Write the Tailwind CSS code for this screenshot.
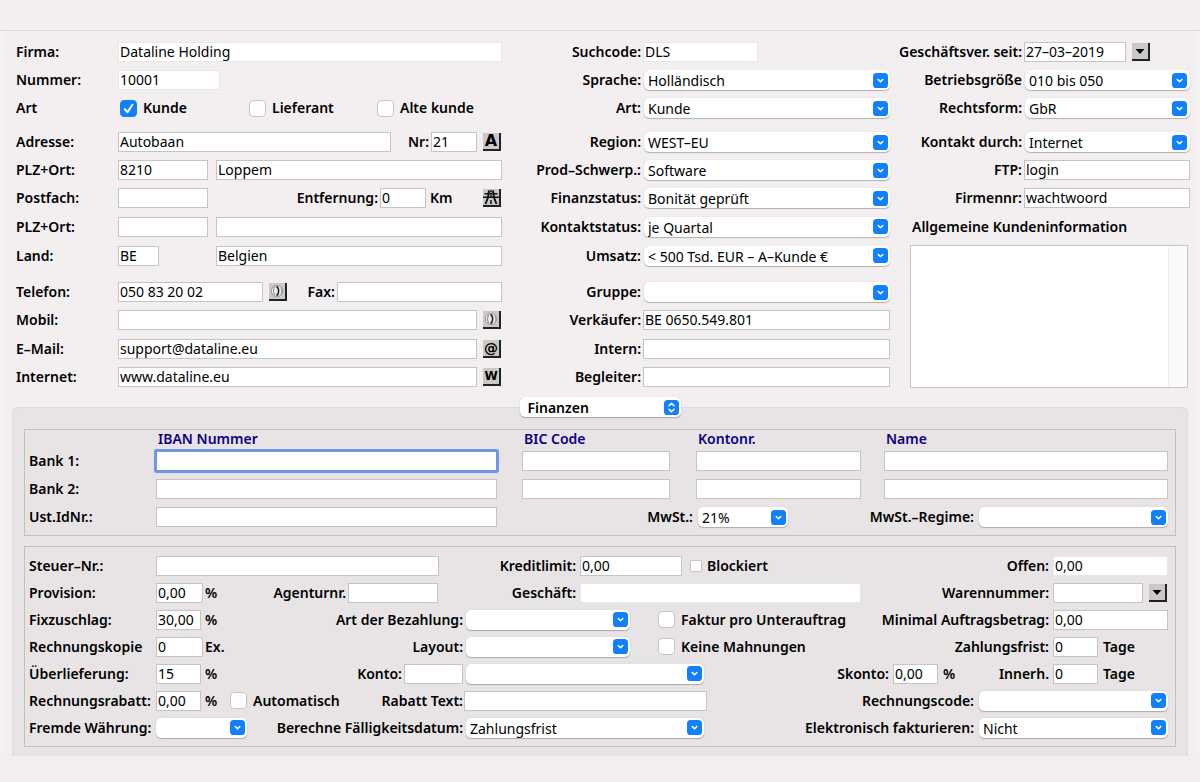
<!DOCTYPE html>
<html lang="de">
<head>
<meta charset="utf-8">
<title>Kundenstamm</title>
<script src="https://cdn.jsdelivr.net/npm/@tailwindcss/browser@4"></script>
</head>
<body class="min-h-screen bg-[#f3eff0] font-['Noto_Sans',sans-serif] text-sm leading-5 text-black">
<svg class="hidden" aria-hidden="true">
  <defs>
    <symbol id="down" viewBox="0 0 15 15"><rect width="15" height="15" rx="3.6" fill="#1280fb"/><path d="M5.2 6.5 7.5 8.8 9.8 6.5" fill="none" stroke="#fff" stroke-width="1.5" stroke-linecap="round" stroke-linejoin="round"/></symbol>
    <symbol id="updown" viewBox="0 0 15 15"><rect width="15" height="15" rx="3.6" fill="#1280fb"/><path d="M5 5.8 7.5 3.2 10 5.8M5 9.2l2.500 2.600L10 9.200" fill="none" stroke="#fff" stroke-width="1.500" stroke-linecap="round" stroke-linejoin="round"/></symbol>
    <symbol id="tick" viewBox="0 0 17 17"><path d="M4.800 9 7.500 12.300 12.400 4.800" fill="none" stroke="#fff" stroke-width="2" stroke-linecap="round" stroke-linejoin="round"/></symbol>
    <symbol id="phone" viewBox="0 0 14 14"><circle cx="7" cy="7" r="5.600" fill="#eeeeea" stroke="#999" stroke-width="1"/><path d="M4.500 2.500Q2.500 7 4.500 11.500" fill="none" stroke="#888" stroke-width="1"/><path d="M6.500 2 8.200 2.500Q10.600 7 8.200 11.500L6.500 12 6.300 10.300 7.400 9.600Q8.400 7 7.400 4.400L6.300 3.700Z" fill="#222"/><path d="M11 3.500Q12.500 7 11 10.500" fill="none" stroke="#888" stroke-width=".8"/></symbol>
    <symbol id="road" viewBox="0 0 16 16"><path d="M1.500 4.800h13M0 8.300h16" stroke="#111" stroke-width="1.500" fill="none"/><path d="M6 1.500 5 8.500 2.500 15M10 1.500l1 7L13.500 15" stroke="#111" stroke-width="1.900" fill="none"/><path d="M8 1v2.500M8 5.800v2M8 11v4" stroke="#111" stroke-width="1.500"/></symbol>
    <symbol id="arrow" viewBox="0 0 14 14"><path d="M2.500 5h9L7 10Z" fill="#000"/></symbol>
  </defs>
</svg>

<header class="h-[31px] border-b border-[#dbd7d8]"></header>

<form class="mx-px border-x border-white/60
  [&_b]:shrink-0 [&_label]:shrink-0 [&_b]:whitespace-nowrap [&_label]:whitespace-nowrap [&_label]:font-semibold [&_b]:font-semibold
  [&_input[type=text]]:h-5 [&_input[type=text]]:min-w-0 [&_input[type=text]]:border [&_input[type=text]]:bg-white [&_input[type=text]]:px-px [&_input[type=text]]:outline-none
  [&_input:not([readonly])]:border-[#c6c3c4] [&_input[readonly]]:border-[#e9e6e7]
  [&_input[type=checkbox]]:appearance-none [&_input[type=checkbox]]:border [&_input[type=checkbox]]:bg-white [&_input[type=checkbox]]:col-start-1 [&_input[type=checkbox]]:row-start-1
  [&_select]:h-5 [&_select]:w-full [&_select]:min-w-0 [&_select]:appearance-none [&_select]:rounded-[5px] [&_select]:bg-white [&_select]:pt-px [&_select]:pl-1 [&_select]:outline-none [&_select]:col-start-1 [&_select]:row-start-1 [&_select]:shadow-[0_1px_1px_#00000040,0_0_1px_#00000030]
  [&_button]:flex [&_button]:size-[18px] [&_button]:shrink-0 [&_button]:items-center [&_button]:justify-center [&_button]:border-r-2 [&_button]:border-b-2 [&_button]:border-[#222] [&_button]:bg-[#cbc9c6] [&_button]:text-base [&_button]:leading-none [&_button]:font-bold [&_button]:font-['DejaVu_Sans',sans-serif]">

  <div class="grid grid-cols-[500fr_388fr_300fr] pt-[7px] pr-2 [&>section]:min-w-0">

    <!-- Adresse -->
    <section class="flex flex-col pl-[14px]">
      <div class="mb-[6px]">
        <div class="flex h-7 items-center"><label for="firma" class="w-[102px]">Firma:</label><input id="firma" type="text" readonly class="flex-1" value="Dataline Holding"></div>
        <div class="flex h-7 items-center"><label for="nummer" class="w-[102px]">Nummer:</label><input id="nummer" type="text" readonly class="w-[102px]" value="10001"></div>
        <div class="flex h-7 items-center"><b class="w-[104px]">Art</b>
          <div class="flex flex-1 items-center">
            <div class="flex w-[129px] items-center gap-[6px]"><span class="grid"><input id="kunde" type="checkbox" checked class="size-[17px] rounded-[4px] border-[#1280fb]! bg-[#1280fb]!"><svg class="pointer-events-none col-start-1 row-start-1 size-[17px]"><use href="#tick"/></svg></span><label for="kunde">Kunde</label></div>
            <div class="flex w-[128px] items-center gap-[6px]"><input id="lieferant" type="checkbox" class="size-[17px] rounded-[4px]"><label for="lieferant">Lieferant</label></div>
            <div class="flex items-center gap-[6px]"><input id="alte" type="checkbox" class="size-[17px] rounded-[4px]"><label for="alte">Alte kunde</label></div>
          </div>
        </div>
      </div>
      <div class="mb-2">
        <div class="flex h-7 items-center"><label for="adresse" class="w-[102px]">Adresse:</label><input id="adresse" type="text" class="flex-1" value="Autobaan"><label for="nr" class="w-[40px] pr-[2px] text-right">Nr:</label><input id="nr" type="text" class="w-[46px]" value="21"><button type="button" class="mr-px ml-[6px]" aria-label="Adresse suchen">A</button></div>
        <div class="flex h-7 items-center"><label for="plz" class="w-[102px]">PLZ+Ort:</label><input id="plz" type="text" class="w-[90px]" value="8210"><input type="text" aria-label="Ort" class="ml-2 flex-1" value="Loppem"></div>
        <div class="flex h-7 items-center"><label for="postfach" class="w-[102px]">Postfach:</label><input id="postfach" type="text" class="w-[90px]"><label for="entf" class="flex-1 pr-[2px] text-right">Entfernung:</label><input id="entf" type="text" class="w-[46px]" value="0"><b class="w-[57px] pl-1">Km</b><button type="button" class="mr-px" aria-label="Route"><svg class="size-4"><use href="#road"/></svg></button></div>
        <div class="flex h-[29px] items-center"><label for="plz2" class="w-[102px]">PLZ+Ort:</label><input id="plz2" type="text" class="w-[90px]"><input type="text" aria-label="Ort Postfach" class="ml-2 flex-1"></div>
        <div class="flex h-[29px] items-center"><label for="land" class="w-[102px]">Land:</label><input id="land" type="text" class="w-[41px]" value="BE"><input type="text" aria-label="Landname" class="ml-[57px] flex-1" value="Belgien"></div>
      </div>
      <div>
        <div class="flex h-7 items-center"><label for="tel" class="w-[102px]">Telefon:</label><input id="tel" type="text" class="w-[145px]" value="050 83 20 02"><button type="button" class="ml-[6px]" aria-label="Anrufen"><svg class="size-[14px]"><use href="#phone"/></svg></button><label for="fax" class="w-[50px] pr-[2px] text-right">Fax:</label><input id="fax" type="text" class="flex-1"></div>
        <div class="flex h-7 items-center"><label for="mobil" class="w-[102px]">Mobil:</label><input id="mobil" type="text" class="flex-1"><button type="button" class="mr-px ml-[6px]" aria-label="Mobil anrufen"><svg class="size-[14px]"><use href="#phone"/></svg></button></div>
        <div class="flex h-[29px] items-center"><label for="mail" class="w-[102px]">E–Mail:</label><input id="mail" type="text" class="flex-1" value="support@dataline.eu"><button type="button" class="mr-px ml-[6px] text-sm!" aria-label="E-Mail schreiben">@</button></div>
        <div class="flex h-7 items-center"><label for="web" class="w-[102px]">Internet:</label><input id="web" type="text" class="flex-1" value="www.dataline.eu"><button type="button" class="mr-px ml-[6px] text-xs!" aria-label="Webseite öffnen">W</button></div>
      </div>
    </section>

    <!-- Klassifizierung -->
    <section class="flex flex-col [&_label]:w-[139px] [&_label]:text-right">
      <div class="mb-[6px]">
        <div class="flex h-7 items-center gap-[2px]"><label for="such">Suchcode:</label><input id="such" type="text" readonly class="w-[115px]" value="DLS"></div>
        <div class="flex h-7 items-center gap-[3px]"><label for="sprache">Sprache:</label><span class="grid flex-1 items-center"><select id="sprache"><option>Holländisch</option></select><svg class="pointer-events-none col-start-1 row-start-1 mr-[2px] size-[15px] justify-self-end"><use href="#down"/></svg></span></div>
        <div class="flex h-7 items-center gap-[3px]"><label for="art">Art:</label><span class="grid flex-1 items-center"><select id="art"><option>Kunde</option></select><svg class="pointer-events-none col-start-1 row-start-1 mr-[2px] size-[15px] justify-self-end"><use href="#down"/></svg></span></div>
      </div>
      <div class="mb-2">
        <div class="flex h-7 items-center gap-[3px]"><label for="region">Region:</label><span class="grid flex-1 items-center"><select id="region"><option>WEST–EU</option></select><svg class="pointer-events-none col-start-1 row-start-1 mr-[2px] size-[15px] justify-self-end"><use href="#down"/></svg></span></div>
        <div class="flex h-7 items-center gap-[3px]"><label for="prod">Prod–Schwerp.:</label><span class="grid flex-1 items-center"><select id="prod"><option>Software</option></select><svg class="pointer-events-none col-start-1 row-start-1 mr-[2px] size-[15px] justify-self-end"><use href="#down"/></svg></span></div>
        <div class="flex h-7 items-center gap-[3px]"><label for="fin">Finanzstatus:</label><span class="grid flex-1 items-center"><select id="fin"><option>Bonität geprüft</option></select><svg class="pointer-events-none col-start-1 row-start-1 mr-[2px] size-[15px] justify-self-end"><use href="#down"/></svg></span></div>
        <div class="flex h-[29px] items-center gap-[3px]"><label for="kst">Kontaktstatus:</label><span class="grid flex-1 items-center"><select id="kst"><option>je Quartal</option></select><svg class="pointer-events-none col-start-1 row-start-1 mr-[2px] size-[15px] justify-self-end"><use href="#down"/></svg></span></div>
        <div class="flex h-[29px] items-center gap-[3px]"><label for="umsatz">Umsatz:</label><span class="grid flex-1 items-center"><select id="umsatz"><option>&lt; 500 Tsd. EUR – A–Kunde €</option></select><svg class="pointer-events-none col-start-1 row-start-1 mr-[2px] size-[15px] justify-self-end"><use href="#down"/></svg></span></div>
      </div>
      <div>
        <div class="flex h-7 items-center gap-[3px]"><label for="gruppe">Gruppe:</label><span class="grid flex-1 items-center"><select id="gruppe"><option></option></select><svg class="pointer-events-none col-start-1 row-start-1 mr-[2px] size-[15px] justify-self-end"><use href="#down"/></svg></span></div>
        <div class="flex h-7 items-center gap-[2px]"><label for="verk">Verkäufer:</label><input id="verk" type="text" class="flex-1" value="BE 0650.549.801"></div>
        <div class="flex h-[29px] items-center gap-[2px]"><label for="intern">Intern:</label><input id="intern" type="text" class="flex-1"></div>
        <div class="flex h-7 items-center gap-[2px]"><label for="begl">Begleiter:</label><input id="begl" type="text" class="flex-1"></div>
      </div>
    </section>

    <!-- Geschäftsbeziehung -->
    <section class="flex flex-col">
      <div class="mb-[6px] [&_label]:w-[132px] [&_label]:text-right">
        <div class="flex h-7 items-center gap-[2px]"><label for="seit">Geschäftsver. seit:</label><input id="seit" type="text" class="w-[102px]" value="27–03–2019"><button type="button" class="ml-1" aria-label="Datum wählen"><svg class="size-[14px]"><use href="#arrow"/></svg></button></div>
        <div class="flex h-7 items-center gap-[3px]"><label for="groesse">Betriebsgröße</label><span class="grid flex-1 items-center"><select id="groesse"><option>010 bis 050</option></select><svg class="pointer-events-none col-start-1 row-start-1 mr-[3px] size-[15px] justify-self-end"><use href="#down"/></svg></span></div>
        <div class="flex h-7 items-center gap-[3px]"><label for="recht">Rechtsform:</label><span class="grid flex-1 items-center"><select id="recht"><option>GbR</option></select><svg class="pointer-events-none col-start-1 row-start-1 mr-[3px] size-[15px] justify-self-end"><use href="#down"/></svg></span></div>
      </div>
      <div class="[&_label]:w-[132px] [&_label]:text-right">
        <div class="flex h-7 items-center gap-[3px]"><label for="kdurch">Kontakt durch:</label><span class="grid flex-1 items-center"><select id="kdurch"><option>Internet</option></select><svg class="pointer-events-none col-start-1 row-start-1 mr-[3px] size-[15px] justify-self-end"><use href="#down"/></svg></span></div>
        <div class="flex h-7 items-center gap-[2px]"><label for="ftp">FTP:</label><input id="ftp" type="text" class="flex-1" value="login"></div>
        <div class="flex h-7 items-center gap-[2px]"><label for="firmennr">Firmennr:</label><input id="firmennr" type="text" class="flex-1" value="wachtwoord"></div>
      </div>
      <div class="flex flex-1 flex-col pr-[2px] pb-[3px] pl-5">
        <label for="info" class="flex h-[33px] items-start pt-[5px] pl-[2px]">Allgemeine Kundeninformation</label>
        <div class="flex flex-1 border border-[#c6c3c4] bg-white"><textarea id="info" class="min-w-0 flex-1 resize-none outline-none"></textarea><span class="mr-[3px] w-4 border-l border-[#efedee] bg-[#fafafa]"></span></div>
      </div>
    </section>
  </div>

  <!-- Finanzen -->
  <section class="mx-[10px] mt-4 rounded-t-[5px] border border-b-0 border-[#dfdbdc] bg-[#e8e4e5] px-[11px] pb-[9px]">
    <div class="mx-auto -mt-[11px] grid w-[161px] items-center"><select aria-label="Bereich" class="pl-2! font-semibold"><option>Finanzen</option></select><svg class="pointer-events-none col-start-1 row-start-1 mr-[2px] size-[15px] justify-self-end"><use href="#updown"/></svg></div>

    <div class="mt-3 border border-[#c2bfc0] pr-[7px] pb-1 pl-1">
      <div class="grid grid-cols-[127px_341fr_25px_148fr_26px_165fr_23px_284fr] items-center">
        <b class="col-start-2 h-[17px] pl-[2px] leading-[17px] text-[#0b0080]">IBAN Nummer</b><b class="col-start-4 h-[17px] pl-[2px] leading-[17px] text-[#0b0080]">BIC Code</b><b class="col-start-6 h-[17px] pl-[2px] leading-[17px] text-[#0b0080]">Kontonr.</b><b class="col-start-8 h-[17px] pl-[2px] leading-[17px] text-[#0b0080]">Name</b>

        <label for="bank1" class="col-start-1">Bank 1:</label><input id="bank1" type="text" class="rounded-[1px] border-[#6f97e4]! ring-2 ring-[#6f97e4]"><span class="h-7"></span><input type="text" aria-label="BIC 1"><span></span><input type="text" aria-label="Kontonr. 1"><span></span><input type="text" aria-label="Name 1">

        <label for="bank2">Bank 2:</label><input id="bank2" type="text"><span class="h-7"></span><input type="text" aria-label="BIC 2"><span></span><input type="text" aria-label="Kontonr. 2"><span></span><input type="text" aria-label="Name 2">

        <label for="ust">Ust.IdNr.:</label><input id="ust" type="text">
        <div class="col-span-6 flex h-7 items-center"><label for="mwst" class="w-[201px] pr-[5px] text-right">MwSt.:</label><span class="grid w-[90px] items-center"><select id="mwst"><option>21%</option></select><svg class="pointer-events-none col-start-1 row-start-1 mr-[2px] size-[15px] justify-self-end"><use href="#down"/></svg></span><label for="regime" class="flex-1 pr-[5px] text-right">MwSt.–Regime:</label><span class="grid w-[189px] items-center"><select id="regime"><option></option></select><svg class="pointer-events-none col-start-1 row-start-1 mr-[2px] size-[15px] justify-self-end"><use href="#down"/></svg></span></div>
      </div>
    </div>

    <div class="mt-[10px] grid grid-cols-[434fr_398fr_307fr] border border-[#c2bfc0] pt-[5px] pr-[7px] pb-[5px] pl-1 [&>div]:flex [&>div]:h-[27px] [&>div]:items-center">
      <div><label for="steuer" class="w-[127px]">Steuer–Nr.:</label><input id="steuer" type="text" class="mr-6 flex-1"></div>
      <div><label for="kredit" class="w-[117px] pr-1 text-right">Kreditlimit:</label><input id="kredit" type="text" class="w-[102px]" value="0,00"><input id="block" type="checkbox" class="ml-2 size-3 rounded-[2px]"><label for="block" class="pl-[5px]">Blockiert</label></div>
      <div><label for="offen" class="flex-1 pr-1 text-right">Offen:</label><input id="offen" type="text" readonly class="w-[115px]" value="0,00"></div>

      <div><label for="prov" class="w-[127px]">Provision:</label><input id="prov" type="text" class="w-[47px]" value="0,00"><b class="pl-[2px]">%</b><label for="agentur" class="flex-1 pr-[2px] text-right">Agenturnr.</label><input id="agentur" type="text" class="mr-[25px] w-[90px]"></div>
      <div><label for="gesch" class="w-[117px] pr-1 text-right">Geschäft:</label><input id="gesch" type="text" readonly class="flex-1"></div>
      <div><label for="waren" class="flex-1 pr-1 text-right">Warennummer:</label><input id="waren" type="text" class="w-[90px]"><button type="button" class="mr-px ml-[6px]" aria-label="Warennummer wählen"><svg class="size-[14px]"><use href="#arrow"/></svg></button></div>

      <div><label for="fix" class="w-[127px]">Fixzuschlag:</label><input id="fix" type="text" class="w-[45px]" value="30,00"><b class="pl-1">%</b><label for="bez" class="flex-1 text-right">Art der Bezahlung:</label></div>
      <div><span class="ml-[3px] grid w-[164px] items-center"><select id="bez"><option></option></select><svg class="pointer-events-none col-start-1 row-start-1 mr-[2px] size-[15px] justify-self-end"><use href="#down"/></svg></span><input id="faktur" type="checkbox" class="ml-7 size-[17px] rounded-[4px]"><label for="faktur" class="pl-[6px]">Faktur pro Unterauftrag</label></div>
      <div><label for="minimal" class="flex-1 pr-1 text-right">Minimal Auftragsbetrag:</label><input id="minimal" type="text" class="w-[115px]" value="0,00"></div>

      <div><label for="kopie" class="w-[127px]">Rechnungskopie</label><input id="kopie" type="text" class="w-[47px]" value="0"><b class="pl-[2px]">Ex.</b><label for="layout" class="flex-1 text-right">Layout:</label></div>
      <div><span class="ml-[3px] grid w-[164px] items-center"><select id="layout"><option></option></select><svg class="pointer-events-none col-start-1 row-start-1 mr-[2px] size-[15px] justify-self-end"><use href="#down"/></svg></span><input id="mahn" type="checkbox" class="ml-7 size-[17px] rounded-[4px]"><label for="mahn" class="pl-[6px]">Keine Mahnungen</label></div>
      <div><label for="frist" class="flex-1 pr-1 text-right">Zahlungsfrist:</label><input id="frist" type="text" class="w-[45px]" value="0"><b class="w-[70px] pl-[5px]">Tage</b></div>

      <div><label for="ueber" class="w-[127px]">Überlieferung:</label><input id="ueber" type="text" class="w-[45px]" value="15"><b class="pl-1">%</b><label for="konto" class="flex-1 pr-[2px] text-right">Konto:</label><input id="konto" type="text" class="w-[59px]"></div>
      <div><span class="ml-[3px] grid w-[238px] items-center"><select aria-label="Kontoname"><option></option></select><svg class="pointer-events-none col-start-1 row-start-1 mr-[2px] size-[15px] justify-self-end"><use href="#down"/></svg></span></div>
      <div class="-ml-6"><label for="skonto" class="w-[56px] pr-1 text-right">Skonto:</label><input id="skonto" type="text" class="w-[45px]" value="0,00"><b class="pl-[5px]">%</b><label for="innerh" class="flex-1 pr-1 text-right">Innerh.</label><input id="innerh" type="text" class="w-[45px]" value="0"><b class="w-[70px] pl-[5px]">Tage</b></div>

      <div><label for="rabatt" class="w-[127px]">Rechnungsrabatt:</label><input id="rabatt" type="text" class="w-[45px]" value="0,00"><b class="w-[29px] pl-1">%</b><input id="auto" type="checkbox" class="size-[17px] rounded-[4px]"><label for="auto" class="pl-[6px]">Automatisch</label><label for="rtext" class="flex-1 text-right">Rabatt Text:</label></div>
      <div><input id="rtext" type="text" class="ml-px w-[243px]"></div>
      <div><label for="rcode" class="flex-1 pr-[5px] text-right">Rechnungscode:</label><span class="grid w-[189px] items-center"><select id="rcode"><option></option></select><svg class="pointer-events-none col-start-1 row-start-1 mr-[2px] size-[15px] justify-self-end"><use href="#down"/></svg></span></div>

      <div><label for="fremd" class="w-[127px]">Fremde Währung:</label><span class="grid w-[91px] items-center"><select id="fremd"><option></option></select><svg class="pointer-events-none col-start-1 row-start-1 mr-[2px] size-[15px] justify-self-end"><use href="#down"/></svg></span><label for="faellig" class="flex-1 text-right">Berechne Fälligkeitsdatum:</label></div>
      <div><span class="ml-[3px] grid w-[238px] items-center"><select id="faellig"><option>Zahlungsfrist</option></select><svg class="pointer-events-none col-start-1 row-start-1 mr-[2px] size-[15px] justify-self-end"><use href="#down"/></svg></span></div>
      <div class="-ml-16"><label for="elek" class="flex-1 pr-[5px] text-right">Elektronisch fakturieren:</label><span class="grid w-[189px] items-center"><select id="elek"><option>Nicht</option></select><svg class="pointer-events-none col-start-1 row-start-1 mr-[2px] size-[15px] justify-self-end"><use href="#down"/></svg></span></div>
    </div>
  </section>
</form>
</body>
</html>
